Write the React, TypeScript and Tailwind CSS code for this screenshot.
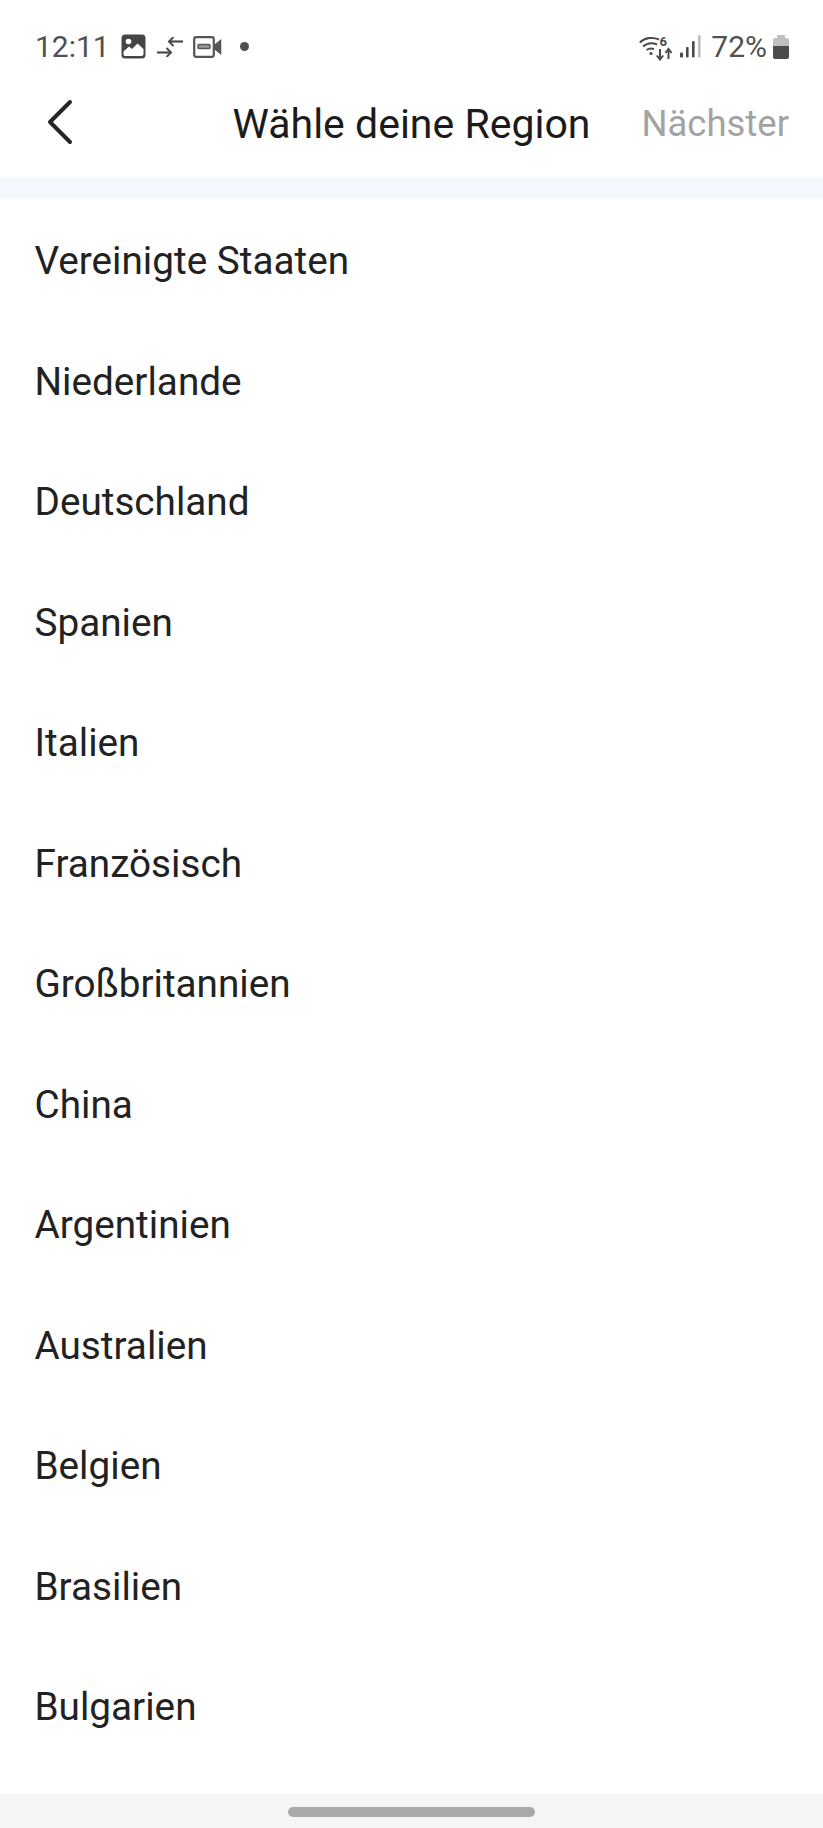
const REGIONS = [
  "Vereinigte Staaten",
  "Niederlande",
  "Deutschland",
  "Spanien",
  "Italien",
  "Französisch",
  "Großbritannien",
  "China",
  "Argentinien",
  "Australien",
  "Belgien",
  "Brasilien",
  "Bulgarien",
];

// Left side status icons: gallery, data saver arrows, video camera, dot
const NotificationIcons = () => (
  <div className="flex items-center ml-[11px]">
    <svg width="25" height="25" viewBox="0 0 25 25" className="mr-[10px]">
      <rect x="0.5" y="0.5" width="24" height="24" rx="3.5" fill="#454545" />
      <circle cx="7.5" cy="7.5" r="2.8" fill="#fff" />
      <path d="M2.5 20.5 L2.5 17.5 L8 12.5 L11 15 L16.5 9.5 L22.5 15 L22.5 20 Q22.5 22 20.5 22 L4.5 22 Q2.5 22 2.5 20.5 Z" fill="#fff" />
    </svg>
    <svg width="28" height="20" viewBox="0 0 28 20" fill="none" stroke="#4a4a4a" strokeWidth="2.2" className="mr-[9px]">
      <path d="M1 15.5 H14" />
      <path d="M10.5 11 L15 15.5 L10.5 20" strokeWidth="2" />
      <path d="M27 4.5 H14" />
      <path d="M17.5 0 L13 4.5 L17.5 9" strokeWidth="2" />
    </svg>
    <svg width="29" height="22" viewBox="0 0 29 22" fill="none" stroke="#555" className="mr-[18px]">
      <rect x="1.2" y="1.2" width="19.6" height="19.6" rx="2" strokeWidth="2.2" />
      <rect x="5" y="8.5" width="12" height="4" rx="1" fill="#999" strokeWidth="1.4" />
      <path d="M22 9 L27.5 4.5 V17.5 L22 13 Z" fill="#555" strokeWidth="1.5" />
    </svg>
    <div className="w-[9px] h-[9px] rounded-full bg-[#4f4f4f]" />
  </div>
);

// Wifi with "6" badge and up/down arrows
const WifiIcon = () => (
  <svg width="34" height="25" viewBox="0 -4 34 29" fill="none" stroke="#4a4a4a" strokeWidth="2" className="h-[29px] -my-[2px]">
    <path d="M0.8 6.5 C6 1.5 14 0.8 20 3.5" />
    <path d="M4 10.5 C8 7 13.5 6.5 18 8.5" />
    <path d="M7.5 14 C10 12.5 12.5 12.2 15 13.2" />
    <circle cx="12" cy="17.5" r="1.6" fill="#4a4a4a" stroke="none" />
    <text x="20.5" y="10" fontSize="13" fontWeight="700" fill="#4a4a4a" stroke="none" fontFamily="Roboto, sans-serif">6</text>
    <path d="M21 13 V23" />
    <path d="M17.8 19.5 L21 23.5 L24.2 19.5" />
    <path d="M29.5 23 V13.5" />
    <path d="M26.5 17 L29.5 13 L32.5 17" />
  </svg>
);

const SignalIcon = () => (
  <svg width="21" height="23" viewBox="0 0 21 23">
    <rect x="0" y="17.5" width="3" height="5" rx="1" fill="#4a4a4a" />
    <rect x="6" y="12" width="2.6" height="10.5" rx="1" fill="#4a4a4a" />
    <rect x="12" y="6" width="2.6" height="16.5" rx="1" fill="#4a4a4a" />
    <rect x="18" y="0" width="2.6" height="22.5" rx="1" fill="#bdbdbd" />
  </svg>
);

const BatteryIcon = () => (
  <div className="flex flex-col items-center w-[16px] ml-[6px]">
    <div className="w-[8px] h-[3px] bg-[#c0c0c0] rounded-t-[1px]" />
    <div className="w-[16px] h-[21px] rounded-[2px] overflow-hidden flex flex-col">
      <div className="h-[8px] bg-[#c0c0c0]" />
      <div className="flex-1 bg-[#4c4c4c]" />
    </div>
  </div>
);

export default function App() {
  return (
    <div
      className="w-[823px] h-[1828px] bg-white flex flex-col overflow-hidden"
      style={{ fontFamily: "Roboto, sans-serif" }}
    >
      {/* Status bar */}
      <div className="h-[70px] pt-[23px] pl-[35px] pr-[34px] flex items-center justify-between shrink-0">
        <div className="flex items-center">
          <span className="text-[30px] leading-none text-[#505050]">12:11</span>
          <NotificationIcons />
        </div>
        <div className="flex items-center">
          <WifiIcon />
          <div className="ml-[7px] mr-[10px]">
            <SignalIcon />
          </div>
          <span className="text-[30px] leading-none text-[#505050]">72%</span>
          <BatteryIcon />
        </div>
      </div>

      {/* Header */}
      <div className="relative h-[107px] shrink-0 flex items-center justify-center">
        <svg
          width="30"
          height="46"
          viewBox="0 0 30 46"
          fill="none"
          stroke="#262626"
          strokeWidth="4"
          strokeLinecap="round"
          strokeLinejoin="round"
          className="absolute left-[46px] top-[29px]"
        >
          <path d="M24 3 L4 23 L24 43" />
        </svg>
        <span className="text-[41px] leading-none text-[#1b1b1b] relative top-[1px]">Wähle deine Region</span>
        <span className="absolute right-[34px] top-[36px] text-[36.5px] leading-none text-[#a3a3a3]">Nächster</span>
      </div>

      <div className="h-[22px] bg-[#f5f8fd] shrink-0" />

      {/* Regions */}
      <div className="flex-1 pt-[2.5px]">
        {REGIONS.map((r) => (
          <div key={r} className="h-[120.5px] pl-[34.5px] flex items-center text-[38.7px] leading-none text-[#222222]">
            {r}
          </div>
        ))}
      </div>

      {/* Gesture bar */}
      <div className="h-[34px] bg-[#f5f5f5] shrink-0 flex justify-center pt-[13px]">
        <div className="w-[247px] h-[10px] rounded-full bg-[#a9a9a9]" />
      </div>
    </div>
  );
}
